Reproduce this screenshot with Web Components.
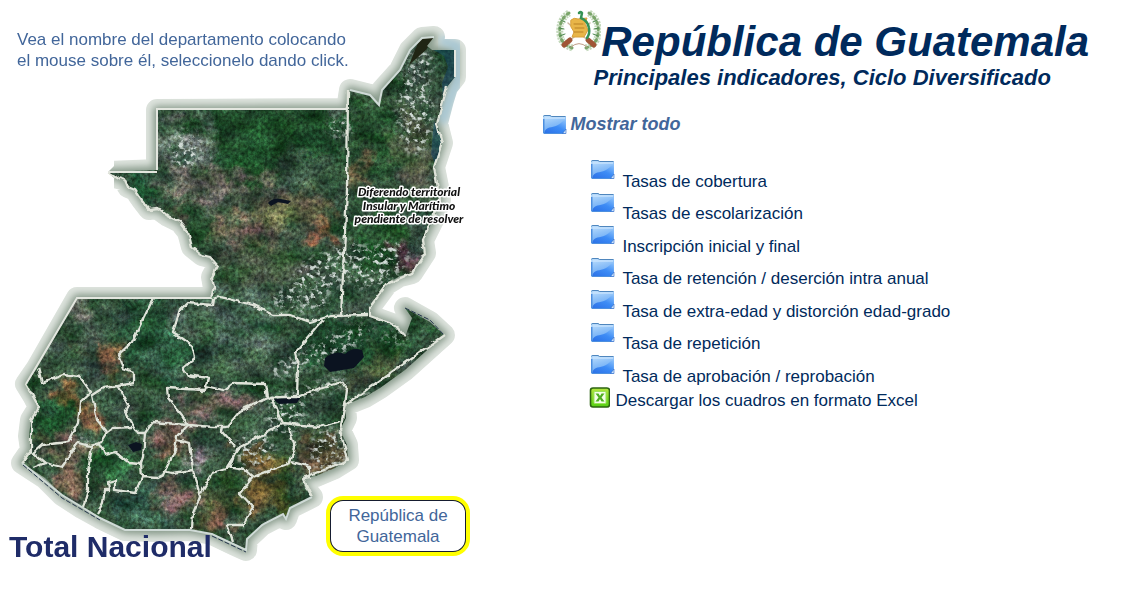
<!DOCTYPE html>
<html lang="es">
<head>
<meta charset="utf-8">
<title>República de Guatemala</title>
<style>
  body { margin: 8px; background: #fff; color: #002a5c; font: 17px/20px "Liberation Sans", Arial, sans-serif; }
</style>
</head>
<body>
<gt-page>
  <gt-map slot="map">
    <span slot="hint">Vea el nombre del departamento colocando<br>el mouse sobre él, seleccionelo dando click.</span>
    <span slot="total">Total Nacional</span>
    <span slot="selected">República de Guatemala</span>
  </gt-map>
  <gt-header>
    República de Guatemala
    <span slot="subtitle">Principales indicadores, Ciclo Diversificado</span>
  </gt-header>
  <gt-toggle>Mostrar todo</gt-toggle>
  <gt-list>
    <gt-folder>Tasas de cobertura</gt-folder>
    <gt-folder>Tasas de escolarización</gt-folder>
    <gt-folder>Inscripción inicial y final</gt-folder>
    <gt-folder>Tasa de retención / deserción intra anual</gt-folder>
    <gt-folder>Tasa de extra-edad y distorción edad-grado</gt-folder>
    <gt-folder>Tasa de repetición</gt-folder>
    <gt-folder>Tasa de aprobación / reprobación</gt-folder>
  </gt-list>
  <gt-download>Descargar los cuadros en formato Excel</gt-download>
</gt-page>

<script>
const define = (name, html) => {
  const template = document.createElement('template');
  template.innerHTML = html;
  customElements.define(name, class extends HTMLElement {
    constructor() {
      super();
      this.attachShadow({ mode: 'open' }).append(template.content.cloneNode(true));
    }
  });
};

const folder = `
<svg class="icon" width="24" height="21" viewBox="0 0 24 21" aria-hidden="true">
  <defs>
    <linearGradient id="f" x1="0" y1="0" x2="0.3" y2="1"><stop offset="0" stop-color="#c3e2fc"/><stop offset="0.5" stop-color="#8ec1f8"/><stop offset="1" stop-color="#62a4f5"/></linearGradient>
    <linearGradient id="g" x1="0" y1="1" x2="1" y2="0"><stop offset="0" stop-color="#1f66e4"/><stop offset="0.55" stop-color="#3486f5"/><stop offset="1" stop-color="#8cc2fc"/></linearGradient>
  </defs>
  <path d="M0 2Q0 1 1 1h6q1 0 1.500 1H22q1 0 1 1v16l-1 1H1q-1 0-1-2z" fill="url(#f)"/>
  <path d="M.5 2.500Q.5 1.500 2 1.500h5l1.500 1H22.500" fill="none" stroke="#4f86bd"/>
  <path d="M1 19C3 12 9 14 14 11.500 18 9.500 19 7 22.500 6V19z" fill="url(#g)" opacity=".85"/>
  <path d="M2 4h20" stroke="#d5ebff" stroke-width="1"/>
  <path d="M0 5h1.500v14H0zM1 19h20v1H1z" fill="#4d8fdf"/>
  <path d="M19.500 19.500L23 15v4.500z" fill="#cfe6ff" stroke="#2b67c4" stroke-width=".6"/>
</svg>`;

define('gt-page', `
<style>
  :host { display: grid; grid-template-columns: minmax(0, 9fr) minmax(0, 10fr); }
  main { display: flex; flex-direction: column; }
</style>
<slot name="map"></slot>
<main><slot></slot></main>`);

define('gt-header', `
<style>
  :host { display: block; text-align: center; font-style: italic; font-weight: bold; }
  .row { display: flex; justify-content: center; align-items: flex-start; }
  h1 { margin: 0; padding-top: 9px; font-size: 42px; line-height: 49px; }
  h2 { margin: 0; font-size: 22px; line-height: 24px; }
  svg { flex: none; }
</style>
<div class="row">
  <svg width="46" height="46" viewBox="0 0 46 46" aria-hidden="true" fill="none" stroke-linecap="round">
    <path d="M14 5C6 10 4 18 5 26s5 12 13 14M34 5c8 5 10 13 9 21s-5 12-13 14" stroke="#c3d8bb" stroke-width="7" stroke-dasharray="2 1" stroke-linecap="butt"/>
    <path d="M14 5C6 10 4 18 5 26s5 11 12 14M34 5c8 5 10 13 9 21s-5 11-12 14" stroke="#7aa56a" stroke-width="3" stroke-dasharray="2 4"/>
    <path d="M6 12l4 2M4 20l5 1M5 28l5-2M42 12l-4 2M44 20l-5 1M43 28l-5-2" stroke="#4e8950"/>
    <path d="M11 36L35 15M37 36L13 15" stroke="#c9b8a2" stroke-width="1.500"/>
    <path d="M9 37l6-5M39 37l-6-5" stroke="#a05536" stroke-width="5"/>
    <path d="M16 39q8-7 16 0" stroke="#c09d88"/>
    <path d="M16 12q3-3 7-1l9-1-2 6 3 6-4 7H17l2-5-3-5z" fill="#e8b548" stroke="#d9a03a"/>
    <path d="M19 16h9M20 20h9M19 24h9" stroke="#b98125"/>
    <path d="M24 5q2-2 3 0l-1 5q7 3 8 10 1 6-2 10" stroke="#359255" stroke-width="2.500"/>
  </svg>
  <h1><slot></slot></h1>
</div>
<h2><slot name="subtitle"></slot></h2>`);

define('gt-toggle', `
<style>
  :host { display: block; padding: 23px 12px 0; }
  button { display: flex; align-items: center; gap: 3px; margin: 0; padding: 0; border: 0; background: none; color: #42669a; font: italic bold 18px/22px "Liberation Sans", Arial, sans-serif; cursor: pointer; }
</style>
<button type="button">${folder}<span><slot></slot></span></button>`);

define('gt-list', `
<style>
  :host { display: grid; grid-auto-rows: 1fr; min-height: 228px; padding: 24px 0 0 60px; }
</style>
<slot></slot>`);

define('gt-folder', `
<style>
  :host { display: grid; }
  a { display: flex; gap: 7px; color: inherit; text-decoration: none; }
  .icon { flex: none; }
  span { align-self: flex-end; }
</style>
<a href="#">${folder}<span><slot></slot></span></a>`);

define('gt-download', `
<style>
  :host { display: block; padding-left: 58px; }
  a { display: flex; gap: 5px; color: inherit; text-decoration: none; }
  svg { flex: none; }
  span { padding-top: 4px; }
</style>
<a href="#">
  <svg width="21" height="21" viewBox="0 0 21 21" aria-hidden="true">
    <defs><linearGradient id="x" x1="0" y1="0" x2="0" y2="1"><stop offset="0" stop-color="#b4e640"/><stop offset="1" stop-color="#55d012"/></linearGradient></defs>
    <rect x="1.500" y="1" width="19" height="19" rx="2.500" fill="url(#x)" stroke="#2c6411" stroke-width="1.600"/>
    <rect x="5" y="4.500" width="12" height="12" rx="1" fill="#f3ffe9" stroke="#9be35c"/>
    <path d="M6.500 6.500h3l1.500 2.500L12.500 6.500h3l-3 4 3 4h-3L11 12l-1.500 2.500h-3l3-4z" fill="#4fae22"/>
  </svg>
  <span><slot></slot></span>
</a>`);

const outline = 'M157 110V170L108 172 118 178 125 180 128 187 135 190 142 200 149 209 157 208 168 216 180 222 188 232 192 247 202 255 210 257 218 266 212 277 214 288 211 298H77L37 368 26 384 34 397 39 407 31 420 29 436 31 450 22 463 45 478 62 495 82 508 100 518 125 530 155 531 190 530 212 534 235 545 246 550 247 539 262 525 283 514 286 519 290 508 312 497 305 488 303 478 316 476 335 468 348 460 347 445 340 430 346 418 345 405 365 397 380 388 405 370 425 352 444 335 430 322 405 308 412 318 405 337 395 325 370 316 370 307 387 284 400 276 412 273 425 253 423 240 433 220 440 200 438 187 434 167 442 143 437 123 443 100 447 87 455 77V50H432L427 46 434 37 422 38 410 50 400 70 382 90 379 105 370 95 350 90 347 109z';
const borders = [
  'M348 90L347 190 341 316', 'M153 299L132 342 118 355 123 368 134 372 134 383 118 386 103 388 92 395 97 420 107 432 100 443',
  'M38 368L42 383 63 375 80 377 91 392 80 402 78 423 68 442 42 445 33 453 45 463 33 468', 'M45 463L62 467 78 443 90 446 100 443',
  'M92 447L88 470 88 490 83 507', 'M100 443L105 455 115 452 128 462 141 463 142 477 135 493 115 490 115 480 108 482 109 490 105 490 103 503 97 513',
  'M118 387L128 405 125 412 138 433 145 433 143 457 141 463', 'M107 432L113 428 132 427', 'M145 433L153 422 188 425 213 427 227 427 240 411 270 397 297 397 320 388 342 382 347 390 345 405',
  'M213 298L212 305 187 303 180 310 173 332 192 345 195 358 183 368 187 375 208 378 205 390 167 388 168 398 182 415 188 425', 'M207 386L223 390 233 383 265 384 267 397',
  'M213 299L220 297 253 305 273 315 290 315 310 322 330 316 368 315', 'M323 320L295 353 298 367 297 395', 'M272 397L282 423 320 427 340 421',
  'M282 423L272 430 240 447 227 467 245 470 253 477 290 463 295 447 288 427', 'M292 462L310 467 310 477 303 478', 'M253 477L240 493 253 507 243 525 227 525 233 542',
  'M223 427L222 432 235 447', 'M188 425L177 437 175 450 163 475 157 478 142 477', 'M177 440L190 443 193 470 172 473 163 471',
  'M193 470L200 497 193 513 192 529', 'M200 494L213 473 230 468 238 447'
].join('');
/* Broad land-cover patches: colour, centre, radii, rotation */
const patches = [
  ['#1d4425',260,130,95,28,0], ['#1e4826',235,155,45,35,20], ['#1d4f2d',140,186,24,12,35], ['#56695f',185,145,28,26,0], ['#64635a',225,190,65,16,8],
  ['#6b5f4f',225,228,55,12,12], ['#7b5037',322,228,18,12,0], ['#284a2e',195,230,18,22,20], ['#565b40',290,210,42,20,0], ['#42573f',260,265,45,28,0],
  ['#43614e',235,320,55,38,10], ['#234c32',150,330,28,38,0], ['#2b563c',170,360,24,20,0], ['#667063',75,315,16,22,20], ['#8a5f46',105,357,20,9,35],
  ['#83583a',64,398,22,10,40], ['#7c5c41',95,418,22,10,30], ['#245331',52,418,18,22,0], ['#6b6350',60,450,26,12,10], ['#75604f',70,480,24,14,30],
  ['#296039',110,465,24,18,0], ['#33594a',145,508,42,18,0], ['#6a5f58',170,430,30,9,0], ['#6d6358',215,402,42,11,0], ['#6d5949',165,445,18,11,0],
  ['#62564c',180,500,20,14,0], ['#736d74',200,458,10,16,0], ['#37502f',220,500,25,20,0], ['#6e5a42',215,520,16,12,0], ['#655632',260,460,24,14,0],
  ['#5a522b',270,495,28,18,0], ['#504c30',320,455,24,20,0], ['#1d452c',345,345,50,22,0], ['#204c2a',400,340,40,14,-38], ['#414e32',375,370,34,7,-38],
  ['#2a4c36',320,408,28,12,0], ['#26502f',375,140,22,42,0], ['#4c5843',415,150,18,45,0], ['#24502b',380,235,28,30,0], ['#726245',360,172,8,13,0],
  ['#49333a',407,256,12,12,0], ['#3a5f49',425,225,12,20,0], ['#2a6741',390,323,12,6,30]
].map(([c, x, y, a, b, r]) => `<ellipse cx="${x}" cy="${y}" rx="${a}" ry="${b}" fill="${c}" transform="rotate(${r} ${x} ${y})"/>`).join('');
const clouds = [
  [420,62,14,12,0], [328,270,44,18,-30], [380,265,32,18,-35], [300,300,30,12,0], [335,345,42,10,-25], [290,366,24,8,-20], [395,338,14,5,0],
  [320,388,30,6,-18], [285,412,20,22,0], [328,450,18,22,0], [255,450,20,18,0], [365,400,18,4,-35], [86,440,10,4,0], [340,127,12,10,0], [185,150,18,20,0], [415,110,18,45,0]
].map(([x, y, a, b, r]) => `<ellipse cx="${x}" cy="${y}" rx="${a}" ry="${b}" transform="rotate(${r} ${x} ${y})"/>`).join('');

define('gt-map', `
<style>
  :host { display: block; position: relative; max-width: 480px; }
  svg { display: block; width: 100%; height: auto; }
  .hint, .total, button { position: absolute; }
  .hint { left: 9px; top: 21px; color: #42669a; line-height: 21px; white-space: nowrap; text-decoration: none; }
  .total { left: 1px; top: 522px; color: #1f2c68; font-size: 30px; line-height: 34px; font-weight: bold; white-space: nowrap; text-decoration: none; }
  button { left: 321px; top: 491px; width: 138px; height: 54px; margin: 0; padding: 0 16px; border: 2px solid #161d30; border-radius: 14px; outline: 4px solid #ffff00; outline-offset: -1px; background: #fff; color: #42669a; font: 17px/21px "Liberation Sans", Arial, sans-serif; cursor: pointer; }
</style>
<svg viewBox="8 8 480 560" role="img" aria-label="Mapa de Guatemala">
  <defs>
    <clipPath id="land"><path d="${outline}"/></clipPath>
    <filter id="soft" x="-10%" y="-10%" width="120%" height="120%"><feGaussianBlur stdDeviation="6"/><feTurbulence type="fractalNoise" baseFrequency=".05" numOctaves="4" seed="8" result="n"/><feGaussianBlur in="SourceGraphic" stdDeviation="5" result="b"/><feDisplacementMap in="b" in2="n" scale="46" xChannelSelector="R" yChannelSelector="G"/></filter>
    <filter id="halo" x="-10%" y="-10%" width="120%" height="120%"><feGaussianBlur stdDeviation="3.500"/></filter>
    <filter id="rough" filterUnits="userSpaceOnUse" x="0" y="0" width="488" height="568"><feTurbulence type="fractalNoise" baseFrequency=".12" numOctaves="2" seed="5"/><feDisplacementMap in="SourceGraphic" scale="5" xChannelSelector="R" yChannelSelector="G"/></filter>
    <filter id="grain" x="0" y="0" width="100%" height="100%" color-interpolation-filters="sRGB">
      <feTurbulence type="fractalNoise" baseFrequency=".31 .27" numOctaves="3" seed="11"/>
      <feColorMatrix values="1.300 .2 0 0 -.25  1.300 .1 0 0 -.2  1.300 0 .2 0 -.25  0 0 0 0 1"/>
    </filter>
    <filter id="tone" x="0" y="0" width="100%" height="100%" color-interpolation-filters="sRGB">
      <feTurbulence type="fractalNoise" baseFrequency=".037 .053" numOctaves="4" seed="21"/>
      <feColorMatrix values="1.600 0 0 0 -.3  1 .4 0 0 -.2  1.300 0 .2 0 -.25  0 0 0 0 1"/>
    </filter>
    <filter id="cloud" x="0" y="0" width="100%" height="100%" color-interpolation-filters="sRGB">
      <feTurbulence type="fractalNoise" baseFrequency=".19 .23" numOctaves="3" seed="3"/>
      <feColorMatrix values="0 0 0 0 .82  0 0 0 0 .86  0 0 0 0 .84  5 0 0 0 -2.600"/>
    </filter>
    <filter id="fade"><feGaussianBlur stdDeviation="4"/></filter>
    <mask id="cover" maskUnits="userSpaceOnUse" x="0" y="0" width="488" height="568"><g fill="#fff" filter="url(#fade)">${clouds}</g></mask>
    <mask id="rim" maskUnits="userSpaceOnUse" x="0" y="0" width="488" height="568">
      <path d="${outline}" fill="#fff" stroke="#fff" stroke-width="22" stroke-linejoin="round"/>
      <path d="M90 150H114V166L108 172 114 178V190H90z" fill="#000"/>
    </mask>
  </defs>
  <g mask="url(#rim)">
    <path d="${outline}" fill="#dde3dd" stroke="#dde3dd" stroke-width="23" stroke-linejoin="round"/>
    <path d="${outline}" fill="#899b8c" stroke="#899b8c" stroke-width="8" stroke-linejoin="round" filter="url(#halo)"/>
    <path d="M440 40L458 46V80L450 100 442 123" fill="none" stroke="#a9c8d4" stroke-width="10" filter="url(#halo)"/>
  </g>
  <g clip-path="url(#land)">
    <rect width="488" height="568" fill="#33503b"/>
    <g filter="url(#soft)">${patches}</g>
    <rect width="488" height="568" filter="url(#tone)" style="mix-blend-mode:overlay" opacity=".6"/>
    <rect width="488" height="568" filter="url(#grain)" style="mix-blend-mode:overlay" opacity=".5"/>
    <g mask="url(#cover)"><rect width="488" height="568" filter="url(#cloud)"/></g>
    <path d="M325 358Q335 350 345 354 352 347 362 350L364 357 354 368 342 370 330 372 324 366z M268 203Q273 197 281 199L291 201 288 204 278 202 271 206z M128 445l8-3 6 2-1 6-8 2z M273 399l28-2-4 6-18 1z" fill="#0b1320"/>
    <path d="M430 48L455 50V77L447 87 443 100 442 83 448 67 444 56z M434 121l8 20-6 25-5-12z" fill="#174a70" opacity=".45"/>
    <path d="M407 70L420 38H434L426 50 410 64z" fill="#202514"/>
  </g>
  <g fill="none" stroke="#dfe3d9" stroke-width="2.300" stroke-linejoin="round" filter="url(#rough)">
    <path d="${borders}"/>
    <path d="M108 172L118 178 125 180 128 187 135 190 142 200 149 209 157 208 168 216 180 222 188 232 192 247 202 255 210 257 218 266 212 277 214 288 211 298M26 384L39 407 31 420 31 450 22 463M312 497L303 478 348 460 340 430 345 405 444 335M405 337L395 325 370 316 370 307 387 284 412 273 425 253 423 240 440 200 434 167 442 143 437 123 447 87"/>
  </g>
  <path d="M157 170V109H347M455 77V50M211 298H77L26 384M108 172H157" fill="none" stroke="#e3e6df" stroke-width="2"/>
  <path d="M22 463L62 495 100 518 125 530 190 530 212 534 246 550 247 539 262 525 283 514 286 519 290 508 312 497M434 37L422 38 410 50 400 70 382 90 379 105 370 95 350 90" fill="none" stroke="#cfdad6" stroke-width="2"/>
  <path d="M23 465L62 498 100 520M212 536L246 552M405 308L430 320 444 335" fill="none" stroke="#26364e" stroke-width="1" stroke-dasharray="5 2"/>
  <g font-family="Lato, sans-serif" font-size="12" font-style="italic" font-weight="900" text-anchor="middle" fill="#111" stroke="#fff" stroke-width="3" stroke-linejoin="round" style="paint-order:stroke">
    <text x="409" y="196">Diferendo territorial</text>
    <text x="409" y="210">Insular y Marítimo</text>
    <text x="409" y="223">pendiente de resolver</text>
  </g>
</svg>
<a class="hint" href="#"><slot name="hint"></slot></a>
<a class="total" href="#"><slot name="total"></slot></a>
<button type="button"><slot name="selected"></slot></button>`);
</script>
</body>
</html>
